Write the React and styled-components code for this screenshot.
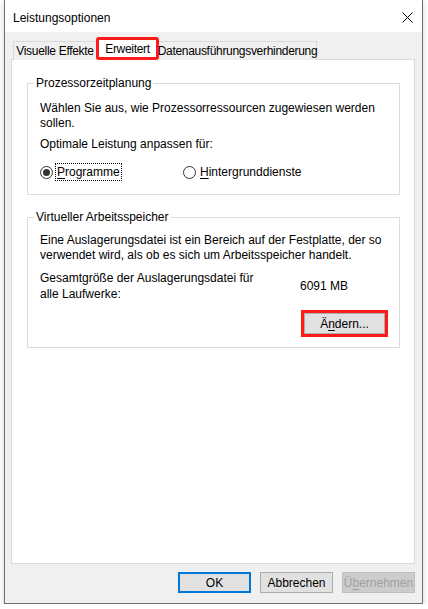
import React from "react";
import styled, { createGlobalStyle } from "styled-components";

const GlobalStyle = createGlobalStyle`
  html, body {
    margin: 0;
    padding: 0;
    background: #ffffff;
  }
  body {
    font-family: "Liberation Sans", Arial, sans-serif;
    font-size: 12px;
    color: #000;
  }
`;

const Window = styled.div`
  margin-left: 4px;
  width: 417px;
  height: 603px;
  border: 1px solid #6f6f6f;
  border-top: none;
  box-shadow: 0 2px 6px rgba(0, 0, 0, 0.18);
  display: flex;
  flex-direction: column;
  background: #f0f0f0;
`;

const TitleBar = styled.div`
  height: 32px;
  box-sizing: border-box;
  background: #ffffff;
  display: flex;
  align-items: center;
  justify-content: space-between;
  padding: 3px 9px 0 8px;
  font-size: 12px;
`;

const CloseButton = styled.button`
  border: none;
  background: transparent;
  width: 12px;
  height: 12px;
  padding: 0;
  display: flex;
  align-items: center;
  justify-content: center;
`;

const Body = styled.div`
  flex: 1;
  display: flex;
  flex-direction: column;
  padding: 6px 7px 0 6px;
`;

const TabRow = styled.div`
  display: flex;
  align-items: flex-end;
  height: 22px;
  padding-left: 2px;
  position: relative;
  z-index: 1;
  margin-bottom: -1px;
`;

const Tab = styled.div`
  height: ${(p) => (p.$active ? "23px" : "19px")};
  box-sizing: border-box;
  display: flex;
  align-items: center;
  justify-content: center;
  width: ${(p) => p.$w}px;
  letter-spacing: -0.3px;
  background: ${(p) => (p.$active ? "#ffffff" : "#f0f0f0")};
  border: ${(p) => (p.$active ? "3px solid #ff1a1a" : "1px solid #d9d9d9")};
  border-bottom: ${(p) => (p.$active ? "3px solid #ff1a1a" : "none")};
  border-radius: ${(p) => (p.$active ? "3px" : "0")};
  margin: ${(p) => (p.$active ? "0 -1px 0 -1px" : "0")};
  position: relative;
  z-index: ${(p) => (p.$active ? 2 : 1)};
  white-space: nowrap;
`;

const Panel = styled.div`
  height: 505px;
  box-sizing: border-box;
  background: #ffffff;
  border: 1px solid #d9d9d9;
  padding: 15px 14px 0 15px;
  display: flex;
  flex-direction: column;
  gap: 14px;
`;

const Group = styled.fieldset`
  margin: 0;
  border: 1px solid #dcdcdc;
  padding: 0 12px ${(p) => p.$bottom || 0}px 12px;
  min-width: 0;
`;

const Legend = styled.legend`
  padding: 0 2px;
  margin-left: -6px;
  line-height: 16px;
`;

const Para = styled.p`
  margin: ${(p) => p.$top || 0}px 0 0 0;
  line-height: 15px;
`;

const RadioRow = styled.div`
  display: flex;
  align-items: center;
  margin-top: 11px;
`;

const RadioItem = styled.label`
  display: flex;
  align-items: center;
  width: ${(p) => p.$w || "auto"};
`;

const Circle = styled.span`
  width: 11px;
  height: 11px;
  border: 1px solid #333;
  border-radius: 50%;
  display: inline-flex;
  align-items: center;
  justify-content: center;
  margin-right: 2px;
  background: #fff;
  &::after {
    content: "";
    width: 7px;
    height: 7px;
    border-radius: 50%;
    background: ${(p) => (p.$checked ? "#333" : "transparent")};
  }
`;

const RadioText = styled.span`
  padding: 1px 1px;
  border: 1px ${(p) => (p.$focus ? "dotted #000" : "solid transparent")};
  line-height: 14px;
`;

const Key = styled.span`
  text-decoration: underline;
  text-underline-offset: 2px;
`;

const SizeRow = styled.div`
  display: flex;
  align-items: center;
  margin-top: 7px;
`;

const SizeLabel = styled.div`
  width: 260px;
  line-height: 16px;
`;

const ButtonRow = styled.div`
  display: flex;
  justify-content: flex-end;
  gap: ${(p) => p.$gap || 9}px;
  margin-top: ${(p) => p.$top || 0}px;
  padding-right: ${(p) => p.$right || 0}px;
`;

const Button = styled.button`
  width: ${(p) => p.$w || 73}px;
  height: 21px;
  box-sizing: border-box;
  font-family: inherit;
  font-size: 12px;
  color: ${(p) => (p.disabled ? "#a0a0a0" : "#000")};
  background: ${(p) => (p.disabled ? "#cccccc" : "#e1e1e1")};
  border: ${(p) =>
    p.$default ? "2px solid #0078d7" : p.disabled ? "1px solid #bfbfbf" : "1px solid #adadad"};
  padding: 0;
  outline: ${(p) => (p.$highlight ? "3px solid #ff1a1a" : "none")};
  outline-offset: 0;
  border-radius: 0;
`;

const Footer = styled.div`
  padding-top: 8px;
`;

export default function App() {
  return (
    <>
      <GlobalStyle />
      <Window>
        <TitleBar>
          <span>Leistungsoptionen</span>
          <CloseButton aria-label="Schließen">
            <svg width="11" height="11" viewBox="0 0 11 11">
              <path d="M0.5 0.5 L10.5 10.5 M10.5 0.5 L0.5 10.5" stroke="#000" strokeWidth="1" />
            </svg>
          </CloseButton>
        </TitleBar>
        <Body>
          <TabRow>
            <Tab $w={84}>Visuelle Effekte</Tab>
            <Tab $w={63} $active>Erweitert</Tab>
            <Tab $w={159}>Datenausführungsverhinderung</Tab>
          </TabRow>
          <Panel>
            <Group $bottom={13}>
              <Legend>Prozessorzeitplanung</Legend>
              <Para $top={10}>
                Wählen Sie aus, wie Prozessorressourcen zugewiesen werden
                <br />
                sollen.
              </Para>
              <Para $top={6}>Optimale Leistung anpassen für:</Para>
              <RadioRow>
                <RadioItem $w="143px">
                  <Circle $checked />
                  <RadioText $focus>
                    <Key>P</Key>rogramme
                  </RadioText>
                </RadioItem>
                <RadioItem>
                  <Circle />
                  <RadioText>
                    <Key>H</Key>intergrunddienste
                  </RadioText>
                </RadioItem>
              </RadioRow>
            </Group>
            <Group $bottom={13}>
              <Legend>Virtueller Arbeitsspeicher</Legend>
              <Para $top={8}>
                Eine Auslagerungsdatei ist ein Bereich auf der Festplatte, der so
                <br />
                verwendet wird, als ob es sich um Arbeitsspeicher handelt.
              </Para>
              <SizeRow>
                <SizeLabel>
                  Gesamtgröße der Auslagerungsdatei für
                  <br />
                  alle Laufwerke:
                </SizeLabel>
                <div>6091 MB</div>
              </SizeRow>
              <ButtonRow $top={11} $right={2}>
                <Button $w={81} $highlight>
                  Ä<Key>n</Key>dern...
                </Button>
              </ButtonRow>
            </Group>
          </Panel>
          <Footer>
            <ButtonRow $gap={9} $right={0}>
              <Button $default>OK</Button>
              <Button>Abbrechen</Button>
              <Button disabled>
                Ü<Key>b</Key>ernehmen
              </Button>
            </ButtonRow>
          </Footer>
        </Body>
      </Window>
    </>
  );
}
